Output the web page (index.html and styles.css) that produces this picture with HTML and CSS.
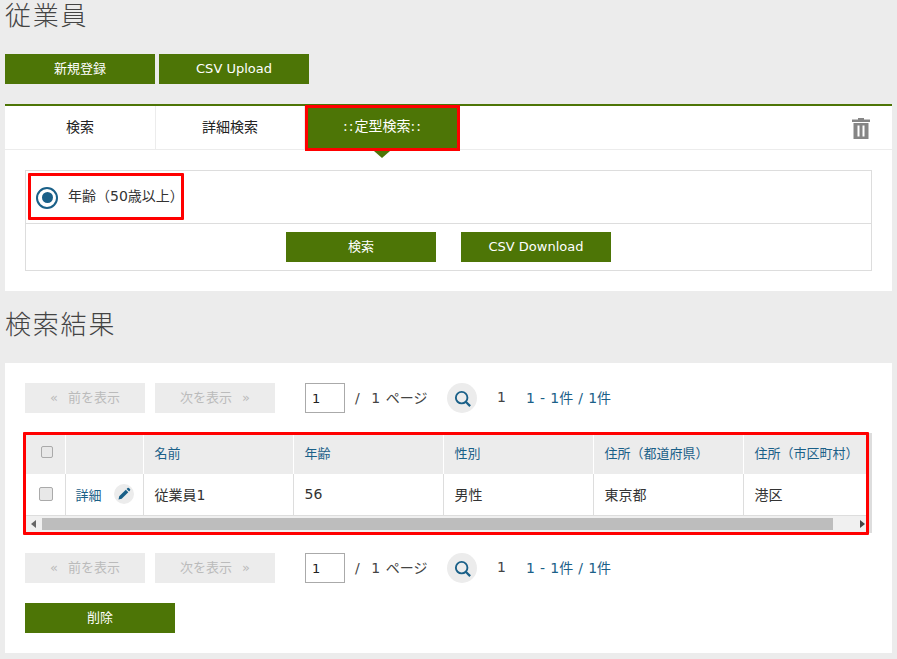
FILE: index.html
```html
<!DOCTYPE html>
<html lang="ja">
<head>
    <meta charset="utf-8" />
    <title>従業員</title>
    <link rel="stylesheet" href="styles.css">
</head>
<body>
    <h1 class="pageTitle firstTitle">従業員</h1>
    <div class="topButtons">
        <a class="btn">新規登録</a>
        <a class="btn">CSV Upload</a>
    </div>

    <div class="panel searchPanel">
        <div class="tabs">
            <div class="tab">検索</div>
            <div class="tab tabSecond">詳細検索</div>
            <div class="tab tabActive"><span class="tabDots">::</span>定型検索<span class="tabDots">::</span></div>
            <svg class="trash" width="18" height="22" viewBox="0 0 18 22">
                <path fill="#858585" d="M6 0h6v1.5h6v2.5H0V1.5h6z"/>
                <path fill="#858585" fill-rule="evenodd" d="M1.5 5h15v16h-15zM5.5 7.5v11h2v-11zM10.5 7.5v11h2v-11z"/>
            </svg>
        </div>
        <div class="searchBox">
            <div class="radioRow">
                <span class="radio"><span class="radioDot"></span></span>
                <span class="radioLabel">年齢（50歳以上）</span>
                <div class="mark markRadio"></div>
            </div>
            <div class="searchActions">
                <a class="btn">検索</a>
                <a class="btn">CSV Download</a>
            </div>
        </div>
    </div>

    <h1 class="pageTitle">検索結果</h1>

    <div class="panel resultPanel">
        <div class="pager">
            <a class="pageBtn"><span class="chev chevLeft">«</span>前を表示</a>
            <a class="pageBtn">次を表示<span class="chev chevRight">»</span></a>
            <input class="pageInput" type="text" value="1">
            <span class="pageOf">/&nbsp; 1 ページ</span>
            <span class="roundBtn">
                <svg width="17" height="17" viewBox="0 0 20 20"><circle cx="9" cy="9" r="6.8" fill="none" stroke="#1a6088" stroke-width="2.2"/><path d="M13.8 13.8L19 19" stroke="#1a6088" stroke-width="2.6"/></svg>
            </span>
            <span class="pageNum">1</span>
            <span class="pageCount">1 - 1件 / 1件</span>
        </div>

        <div class="tableWrap">
            <div class="tableClip">
                <table class="resultTable">
                    <tr>
                        <th class="colCheck"><span class="check checkHead"></span></th>
                        <th class="colDetail"></th>
                        <th class="colData">名前</th>
                        <th class="colData">年齢</th>
                        <th class="colData">性別</th>
                        <th class="colData">住所（都道府県）</th>
                        <th class="colData">住所（市区町村）</th>
                    </tr>
                    <tr>
                        <td class="cellCheck"><span class="check"></span></td>
                        <td class="cellDetail"><div class="detailCell"><span class="detailLink">詳細</span>
                            <span class="editBtn"><svg width="14" height="14" viewBox="0 0 14 14"><path fill="#1a6088" d="M1.5 12.5l.7-3.2 6.6-6.6 2.5 2.5-6.6 6.6zM9.6 1.9l.9-.9a1 1 0 0 1 1.4 0l1.1 1.1a1 1 0 0 1 0 1.4l-.9.9z"/></svg></span>
                        </div></td>
                        <td>従業員1</td>
                        <td>56</td>
                        <td>男性</td>
                        <td>東京都</td>
                        <td>港区</td>
                    </tr>
                </table>
                <div class="scrollbar">
                    <span class="arrow arrowLeft"></span>
                    <span class="thumb"></span>
                    <span class="arrow arrowRight"></span>
                </div>
            </div>
            <div class="mark markTable"></div>
        </div>

        <div class="pager pagerBottom">
            <a class="pageBtn"><span class="chev chevLeft">«</span>前を表示</a>
            <a class="pageBtn">次を表示<span class="chev chevRight">»</span></a>
            <input class="pageInput" type="text" value="1">
            <span class="pageOf">/&nbsp; 1 ページ</span>
            <span class="roundBtn">
                <svg width="17" height="17" viewBox="0 0 20 20"><circle cx="9" cy="9" r="6.8" fill="none" stroke="#1a6088" stroke-width="2.2"/><path d="M13.8 13.8L19 19" stroke="#1a6088" stroke-width="2.6"/></svg>
            </span>
            <span class="pageNum">1</span>
            <span class="pageCount">1 - 1件 / 1件</span>
        </div>

        <a class="btn deleteBtn">削除</a>
    </div>
</body>
</html>
```

FILE: styles.css
```css
html, body
{
    margin:0;
    padding:0;
}
body
{
    width:887px;
    height:659px;
    padding:0 5px;
    overflow:hidden;
    background-color:#ececec;
    color:#333;
    font-family:"DejaVu Sans", "Noto Sans CJK JP", sans-serif;
    font-size:13px;
    text-spacing-trim:space-all;
}
.pageTitle
{
    margin:0;
    height:40px;
    line-height:40px;
    font-family:"Noto Sans CJK JP", sans-serif;
    font-size:26px;
    font-weight:300;
    letter-spacing:1.8px;
    color:#444;
}
.firstTitle
{
    height:30px;
    line-height:28px;
}
.btn
{
    display:block;
    width:150px;
    height:30px;
    line-height:29px;
    text-align:center;
    color:#fff;
    background-color:#4d7506;
}
.topButtons
{
    display:flex;
    gap:4px;
    margin-top:24px;
    margin-bottom:20px;
}
.panel
{
    background-color:#fff;
}
.searchPanel
{
    height:185px;
    margin-bottom:12px;
    border-top:2px solid #4d7506;
}
.tabs
{
    position:relative;
    display:flex;
    height:43px;
    border-bottom:1px solid #ececec;
}
.tab
{
    width:151px;
    box-sizing:border-box;
    line-height:42px;
    text-align:center;
    font-size:14px;
    border-right:1px solid #ececec;
    color:#222;
}
.tabSecond
{
    width:149px;
}
.tabActive
{
    position:relative;
    width:155px;
    height:46px;
    margin-top:-1px;
    line-height:43px;
    border:none;
    color:#fff;
    background-color:#4d7506;
    outline:3px solid #f00;
    outline-offset:-3px;
}
.tabDots
{
    letter-spacing:1px;
}
.tabActive:after
{
    content:"";
    position:absolute;
    left:69px;
    top:46px;
    border-style:solid;
    border-width:7px 8px 0 8px;
    border-color:#4d7506 transparent transparent transparent;
}
.trash
{
    margin-left:auto;
    margin-right:22px;
    margin-top:12px;
}
.searchBox
{
    margin:20px 20px 0 20px;
    height:99px;
    border:1px solid #ddd;
}
.radioRow
{
    position:relative;
    display:flex;
    align-items:center;
    gap:10px;
    height:52px;
    padding-left:10px;
    border-bottom:1px solid #ddd;
}
.radio
{
    display:flex;
    align-items:center;
    justify-content:center;
    width:22px;
    height:22px;
    box-sizing:border-box;
    border:2.5px solid #1a6088;
    border-radius:50%;
    margin-top:1px;
}
.radioDot
{
    width:11px;
    height:11px;
    border-radius:50%;
    background-color:#1a6088;
}
.radioLabel
{
    margin-top:-5px;
    font-size:14px;
}
.mark
{
    position:absolute;
    box-sizing:border-box;
    border:3px solid #f00;
    border-radius:1px;
    pointer-events:none;
}
.markRadio
{
    left:2px;
    top:2px;
    width:156px;
    height:47px;
}
.searchActions
{
    display:flex;
    justify-content:center;
    gap:25px;
    padding-top:8px;
}
.resultPanel
{
    height:290px;
    margin-top:20px;
    padding:20px;
    box-sizing:border-box;
}
.pager
{
    display:flex;
    align-items:center;
    height:30px;
}
.pagerBottom
{
    margin-top:20px;
}
.pageBtn
{
    display:block;
    width:120px;
    height:30px;
    line-height:29px;
    margin-right:10px;
    text-align:center;
    color:#bbb;
    background-color:#ececec;
}
.chev
{
    font-size:13px;
}
.chevLeft
{
    margin-right:10px;
}
.chevRight
{
    margin-left:10px;
}
.pageInput
{
    width:40px;
    height:30px;
    box-sizing:border-box;
    margin:0 0 0 20px;
    padding:0 6px;
    border:1px solid #aaa;
    border-radius:0;
    font-family:inherit;
    font-size:13px;
    color:#222;
}
.pageOf
{
    width:92px;
    margin-left:10px;
    margin-top:-3px;
    font-size:14px;
    word-spacing:1.3px;
    color:#444;
}
.roundBtn
{
    display:flex;
    align-items:center;
    justify-content:center;
    width:30px;
    height:30px;
    border-radius:50%;
    background-color:#ececec;
}
.pageNum
{
    width:29px;
    margin-left:20px;
    margin-top:-3px;
    font-size:14px;
    color:#444;
}
.pageCount
{
    margin-top:-3px;
    font-size:14px;
    word-spacing:.7px;
    color:#1a6088;
}
.tableWrap
{
    position:relative;
    height:100px;
    margin-top:20px;
    box-sizing:border-box;
    border-right:3px solid #ddd;
    border-top:1px solid #ddd;
    border-bottom:1px solid #ddd;
}
.tableClip
{
    overflow:hidden;
    height:100%;
    margin-left:1px;
}
.resultTable
{
    width:867px;
    table-layout:fixed;
    border-collapse:collapse;
}
.resultTable th
{
    height:40px;
    padding:0 10px 4px 11px;
    box-sizing:border-box;
    text-align:left;
    font-weight:400;
    white-space:nowrap;
    color:#1a6088;
    background-color:#ececec;
    border-right:1px solid #fff;
}
.resultTable td
{
    height:41px;
    padding:0 10px 0 11px;
    box-sizing:border-box;
    white-space:nowrap;
    font-size:14px;
    color:#333;
    border-right:1px solid #ddd;
    border-bottom:1px solid #ddd;
}
.resultTable .cellCheck
{
    padding-left:13px;
}
.resultTable .cellDetail
{
    padding-left:10px;
    font-size:13px;
}
.colCheck
{
    width:39px;
}
.colDetail
{
    width:78px;
}
.colData
{
    width:150px;
}
.check
{
    display:block;
    width:12px;
    height:12px;
    border:1px solid #aaa;
    border-radius:2px;
    background-color:#e8e8e8;
}
.checkHead
{
    width:10px;
    height:10px;
    margin-left:4px;
}
.detailCell
{
    display:flex;
    align-items:center;
    justify-content:space-between;
    margin-right:-1px;
}
.detailLink
{
    color:#1a6088;
}
.editBtn
{
    display:flex;
    align-items:center;
    justify-content:center;
    width:20px;
    height:20px;
    border-radius:50%;
    background-color:#ececec;
}
.scrollbar
{
    display:flex;
    align-items:center;
    height:17px;
    background-color:#f0f0f0;
}
.thumb
{
    flex:none;
    width:791px;
    height:12px;
    margin-left:1px;
    background-color:#bdbdbd;
}
.arrow
{
    flex:none;
    width:0;
    height:0;
    border-style:solid;
}
.arrowLeft
{
    margin-left:5px;
    margin-right:5px;
    border-width:4px 5px 4px 0;
    border-color:transparent #666 transparent transparent;
}
.arrowRight
{
    margin-left:27px;
    border-width:4px 0 4px 5px;
    border-color:transparent transparent transparent #444;
}
.markTable
{
    left:-2px;
    top:-2px;
    width:846px;
    height:103px;
}
.deleteBtn
{
    margin-top:20px;
}
```
